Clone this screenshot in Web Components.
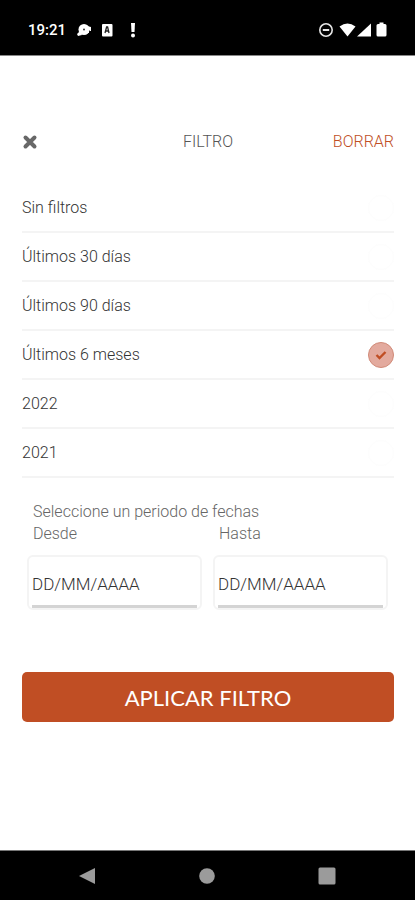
<!DOCTYPE html>
<html lang="es">
<head>
<meta charset="utf-8">
<meta name="viewport" content="width=device-width, initial-scale=1">
<title>Filtro</title>
<style>
html, body { margin: 0; }
body {
  --accent: #c04e24;
  --line: #f4f4f4;
  font-family: Roboto, "Liberation Sans", sans-serif;
  font-size: 16px;
  font-weight: 300;
  line-height: 22px;
  color: #333;
  background: #fff;
}
</style>
</head>
<body>
<filter-screen>
  <status-bar slot="top" time="19:21"></status-bar>
  <filter-header>FILTRO</filter-header>
  <filter-options selected="3"></filter-options>
  <date-range>
    Seleccione un periodo de fechas
    <date-field slot="fields" label="Desde"></date-field>
    <date-field slot="fields" label="Hasta"></date-field>
  </date-range>
  <apply-button>APLICAR FILTRO</apply-button>
  <nav-bar slot="bottom"></nav-bar>
</filter-screen>

<script>
const define = (name, html, setup) => {
  const template = document.createElement('template');
  template.innerHTML = `<style>*{box-sizing:border-box}button{font:inherit;color:inherit;border:0;padding:0;background:none;cursor:pointer}svg{display:block}</style>${html}`;
  customElements.define(name, class extends HTMLElement {
    constructor() {
      super();
      this.attachShadow({ mode: 'open' }).append(template.content.cloneNode(true));
    }
    connectedCallback() { if (setup) setup(this, this.shadowRoot); }
  });
};

define('filter-screen', `
<style>
:host { display: flex; flex-direction: column; min-height: 100vh; }
main { flex: 1; display: flex; flex-direction: column; padding: 75px 21px 24px 22px; }
</style>
<slot name="top"></slot>
<main><slot></slot></main>
<slot name="bottom"></slot>`);

define('status-bar', `
<style>
:host { display: block; background: #000; color: #fff; border-bottom: 1px solid #888; }
header { display: flex; align-items: center; justify-content: space-between; height: 55px; padding: 5px 28px 0; }
div { display: flex; align-items: center; }
time { font-size: 15px; font-weight: 500; margin-right: 11px; }
.left svg { margin-right: 9px; }
</style>
<header>
  <div class="left">
    <time></time>
    <svg width="15" height="14" viewBox="0 0 15 14" fill="#fff"><path d="M0 11l3-3 2 4-4 1zM10 3l4 1v4h-1l-1-1v3h-2z"/><circle cx="7" cy="6.500" r="5.500"/><circle cx="7" cy="6.500" r="1" fill="#333"/></svg>
    <svg width="12" height="14" viewBox="0 0 12 14"><rect x="1" y="1" width="10.500" height="12.500" rx="1" fill="#fff"/><path d="M4 10l1.600-6h1L8 10M4.500 8h3" fill="none" stroke="#222" stroke-width="1.300"/></svg>
    <svg style="margin-left:5px" width="12" height="16" viewBox="0 0 12 16" fill="#fff"><path d="M4 1h4l-.5 9h-3z"/><circle cx="6" cy="13.500" r="2"/></svg>
  </div>
  <div>
    <svg width="16" height="16" viewBox="0 0 16 16" fill="none" stroke="#e6e6e6"><circle cx="8" cy="8" r="6.200" stroke-width="1.600"/><path d="M4.800 8h6.400" stroke-width="2"/></svg>
    <svg style="margin-left:5px" width="17" height="16" viewBox="0 0 17 16" fill="#fff"><path d="M.5 4.500Q8.500-1.500 16.500 4.500L8.500 14.500z"/></svg>
    <svg width="16" height="16" viewBox="0 0 16 16" fill="#fff"><path d="M15 1.500v13H1z"/></svg>
    <svg style="margin-left:4px" width="11" height="16" viewBox="0 0 11 16" fill="#fff"><path d="M3.500.5h4V2H9q1.500 0 1.500 1.500v9.500q0 1.500-1.500 1.500H2Q.5 14.500.5 13V3.500Q.5 2 2 2h1.500z"/></svg>
  </div>
</header>`, (el, root) => { root.querySelector('time').textContent = el.getAttribute('time'); });

define('filter-header', `
<style>
:host { display: grid; grid-template-columns: 1fr auto 1fr; align-items: center; color: #555; margin-bottom: 31px; }
h1 { margin: 0; font: inherit; }
.close { justify-self: start; }
.clear { justify-self: end; color: var(--accent); }
</style>
<button class="close" aria-label="Cerrar"><svg width="16" height="16" viewBox="0 0 16 16"><path d="M3.500 3.500l9 9M12.500 3.500l-9 9" stroke="#686868" stroke-width="4" stroke-linecap="round"/></svg></button>
<h1><slot></slot></h1>
<button class="clear">BORRAR</button>`);

define('filter-options', `
<style>
:host { display: block; margin-bottom: 23px; }
fieldset { border: 0; margin: 0; padding: 0; min-width: 0; }
label { display: flex; align-items: center; justify-content: space-between; height: 49px; border-bottom: 2px solid var(--line); cursor: pointer; }
input { appearance: none; width: 26px; height: 26px; margin: 0; border: 1px solid #fdfdfd; border-radius: 50%; }
input:checked { border: 1px solid #d18a78; background: #e3aa9e url("data:image/svg+xml,%3Csvg xmlns='http://www.w3.org/2000/svg' viewBox='0 0 24 24'%3E%3Cpath d='M7.500 12l3 3 6-6' fill='none' stroke='%23c04e24' stroke-width='2.400'/%3E%3C/svg%3E") center / 24px; }
</style>
<fieldset aria-label="Periodo"></fieldset>`, (el, root) => {
  const set = root.querySelector('fieldset');
  const names = ['Sin filtros', 'Últimos 30 días', 'Últimos 90 días', 'Últimos 6 meses', '2022', '2021'];
  set.innerHTML = names.map((name, i) =>
    `<label><span>${name}</span><input type="radio" name="period"${i === +el.getAttribute('selected') ? ' checked' : ''}></label>`).join('');
});

define('date-range', `
<style>
:host { display: block; color: #666; margin-bottom: 62px; padding: 0 6px 0 5px; }
p { margin: 0; padding-left: 6px; }
.fields { display: grid; grid-template-columns: 1fr 1fr; gap: 11px; }
</style>
<p><slot></slot></p>
<div class="fields"><slot name="fields"></slot></div>`);

define('date-field', `
<style>
:host { display: block; min-width: 0; }
label { display: block; padding-left: 6px; margin-bottom: 10px; }
.box { border: 2px solid var(--line); border-radius: 6px; padding: 0 3px; }
input { display: block; width: 100%; height: 51px; padding: 5px 0 0; border: 0; border-bottom: 3px solid #d4d4d4; background: none; font: inherit; font-size: 17px; color: #333; outline: 0; }
input::placeholder { color: #333; opacity: 1; }
</style>
<label for="date"></label>
<div class="box"><input id="date" type="text" inputmode="numeric" placeholder="DD/MM/AAAA"></div>`,
(el, root) => { root.querySelector('label').textContent = el.getAttribute('label'); });

define('apply-button', `
<style>
:host { display: block; }
button { display: block; width: 100%; height: 50px; padding-top: 2px; border-radius: 5px; background: var(--accent); color: #fff; font-family: Lato, "Open Sans", sans-serif; font-size: 22px; font-weight: 400; }
</style>
<button><slot></slot></button>`);

define('nav-bar', `
<style>
:host { display: block; background: #000; border-top: 1px solid #777; }
nav { display: flex; justify-content: space-between; align-items: center; height: 49px; padding: 0 79px 0 78px; }
</style>
<nav aria-label="Sistema">
  <button aria-label="Atrás"><svg width="18" height="18" viewBox="0 0 18 18"><path d="M1 9L17 1v16z" fill="#9b9b9b"/></svg></button>
  <button aria-label="Inicio"><svg width="18" height="18" viewBox="0 0 18 18"><circle cx="9" cy="9" r="7.800" fill="#9b9b9b"/></svg></button>
  <button aria-label="Recientes"><svg width="18" height="18" viewBox="0 0 18 18"><rect x=".5" y=".5" width="17" height="17" rx="1.500" fill="#9b9b9b"/></svg></button>
</nav>`);
</script>
</body>
</html>
